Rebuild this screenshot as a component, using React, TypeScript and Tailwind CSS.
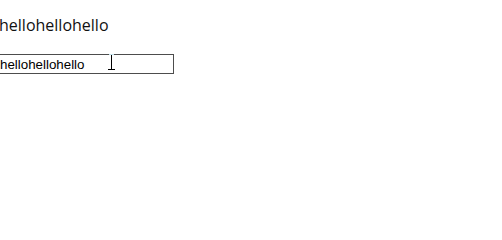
import React from "react";

export default function App() {
  return (
    <div className="relative w-[502px] h-[203px] bg-white overflow-hidden">
      <div className="pt-[14px] -ml-[1px]">
        <div className="text-[16px] leading-[22px] text-[#111] font-['Open_Sans',sans-serif]">
          hellohellohello
        </div>
        <div className="mt-[18px] -ml-[1px]">
          <input
            readOnly
            value="hellohellohello"
            className="block w-[176px] h-[20px] border border-[#4d4d4d] px-[1px] py-[1px] text-[13.33px] text-black font-['Liberation_Sans',Arial,sans-serif] outline-none bg-white"
          />
        </div>
      </div>
      <svg
        className="absolute left-[107px] top-[54px] pointer-events-none"
        width="9"
        height="17"
        viewBox="0 0 9 17"
      >
        <rect x="2" y="0" width="5" height="1" fill="#bfe0ea" />
        <rect x="4" y="1" width="1" height="14" fill="#000" />
        <rect x="1" y="15" width="7" height="1" fill="#000" />
      </svg>
    </div>
  );
}
